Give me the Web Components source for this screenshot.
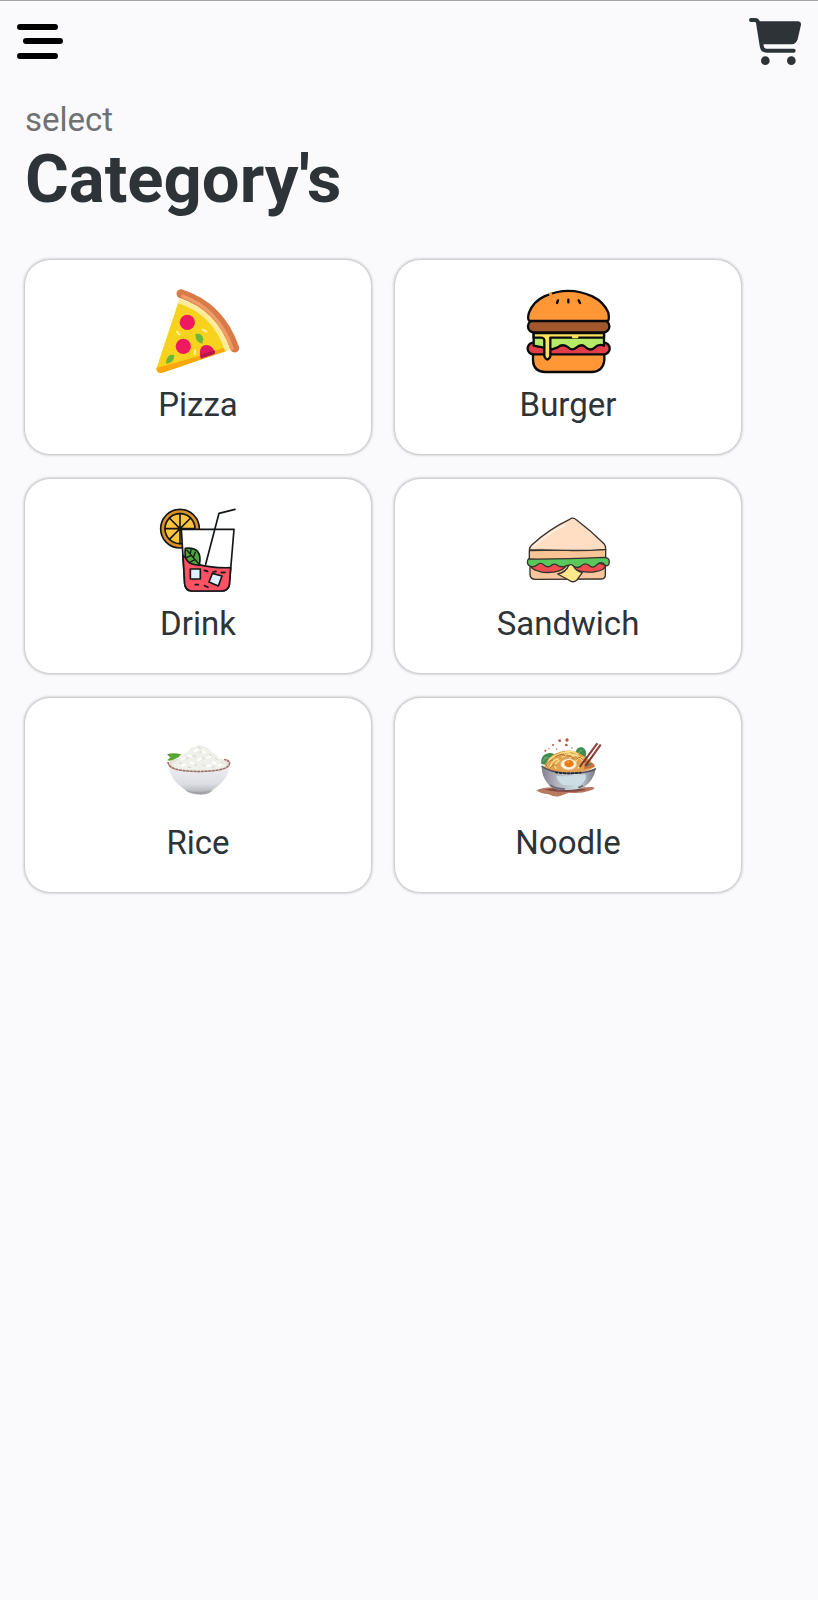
<!DOCTYPE html>
<html lang="en">
<head>
<meta charset="utf-8">
<meta name="viewport" content="width=device-width, initial-scale=1">
<title>Food categories</title>
<style>
  body { margin: 0; background: #fafafd; font-family: Roboto, sans-serif; color: #2d3337; }
</style>
</head>
<body>
<category-screen></category-screen>
<script>
const icons = {
  pizza: `<svg viewBox="33 30 252 252" aria-hidden="true">
    <path d="M101 64 Q208 91 252 210 L50 278 Q36 281 34 266Z" fill="#f7d31d"/>
    <path d="M34 264 Q140 236 235 204 L244 213 L50 279 Q36 281 34 264Z" fill="#fba70d"/>
    <path d="M98 70 L102 56 Q215 85 256 207 L240 213 Q203 101 98 70Z" fill="#ffec9a"/>
    <path d="M108 41 Q226 79 269 204" fill="none" stroke="#d97b48" stroke-width="27" stroke-linecap="round"/>
    <path d="M113 49 Q218 85 261 205" fill="none" stroke="#ef9c66" stroke-width="10" stroke-linecap="round"/>
    <circle cx="127" cy="127" r="23" fill="#ee1961"/><circle cx="115" cy="199" r="23" fill="#ee1961"/>
    <path d="M165 224 C160 184 207 188 209 220 L168 235Z" fill="#e3195c"/>
    <path d="M165 224 L210 211 L209 222 L168 236Z" fill="#bc144c"/>
    <path d="M151 162 Q171 158 175 177 L172 191 Q151 187 151 162Z M88 225 Q65 220 63 250 Q87 252 88 225Z" fill="#65b83c"/>
    <g stroke="#fff0a1" stroke-width="6" stroke-linecap="round"><path d="M96 155 L103 163 M173 149 L184 155 M150 211 L149 222"/></g>
  </svg>`,
  burger: `<svg viewBox="33 30 252 252" aria-hidden="true">
    <g stroke="#080a0c" stroke-width="7" stroke-linejoin="round" stroke-linecap="round">
    <path d="M54 216 H268 V242 Q263 276 230 276 H90 Q56 275 54 242Z" fill="#ff9736"/>
    <rect x="38" y="188" width="246" height="35" rx="17" fill="#e23e49"/>
    <path d="M56 155 H267 V197 Q252 190 239 203 Q225 215 211 201 Q199 190 184 203 Q171 214 158 201 Q143 190 128 202 L111 208 L56 197Z" fill="#b7e968"/>
    <path d="M56 159 H267 V173 H106 V229 Q97 248 88 229 V180 Q86 173 78 173 H56Z" fill="#ffe15f"/>
    <path d="M174 171 H187" stroke="#ffe15f"/>
    <rect x="39" y="121" width="244" height="36" rx="17" fill="#a3572c"/>
    <path d="M44 123 Q36 119 42 98 Q55 64 88 49 Q160 16 232 49 Q267 66 280 98 Q284 119 278 123Z" fill="#ff9736"/>
    <path d="M129 61 L126 69 M160 59 V67 M191 61 L195 69" fill="none"/>
    </g><path d="M103 45 L110 40" stroke="#ff9736" stroke-width="9"/>
  </svg>`,
  drink: `<svg viewBox="33 33 252 252" aria-hidden="true">
    <g stroke="#14171a" stroke-width="5" stroke-linejoin="round" stroke-linecap="round">
    <circle cx="105" cy="92" r="58" fill="#d99123"/><circle cx="105" cy="92" r="45" fill="#ffc43d"/>
    <path d="M105 47 V137 M60 92 H150 M73 60 L137 124 M137 60 L73 124" fill="none"/>
    <path d="M109 94 H267 L253 261 Q249 279 229 279 H140 Q121 278 119 257Z" fill="#fff"/>
    <path d="M114 172 Q130 191 158 199 Q205 211 257 209 L253 261 Q249 279 229 279 H140 Q121 278 119 257Z" fill="#ff5265"/>
    <path d="M182 199 L222 46 L270 34" fill="none"/>
    <path d="M121 151 Q174 145 163 201 Q113 202 121 151Z" fill="#4da53c"/>
    <path d="M126 157 L160 196 M136 168 L138 155 M145 178 L151 163 M138 173 L125 178 M149 185 L136 192" stroke-width="4" fill="none"/>
    <path d="M136 213 H166 V243 H136Z M202 226 L231 234 L220 264 L192 252Z" fill="#dff0ff"/>
    <path d="M178 217 L188 220 M204 222 L213 220 M229 224 L240 223 M151 260 H160 M179 263 L189 268" fill="none"/></g>
  </svg>`,
  sandwich: `<svg viewBox="33 33 252 252" aria-hidden="true">
    <g stroke="#39312d" stroke-width="4" stroke-linejoin="round" stroke-linecap="round">
    <path d="M45 202 H271 V232 Q270 244 255 243 L63 244 Q46 245 45 230Z" fill="#f9c69c"/>
    <path d="M43 158 L272 154 V188 H43Z" fill="#f9c596"/>
    <path d="M43 155 Q43 147 51 140 Q104 92 164 64 Q173 56 184 65 Q229 99 267 137 Q273 143 272 154 Q204 159 158 157Z" fill="#ffdec3"/>
    <path d="M46 195 Q96 184 151 207 Q133 226 85 223 Q42 216 46 195Z M174 210 Q218 183 272 201 Q271 218 235 222 Q197 225 174 210Z" fill="#ee4e50"/>
    <path d="M40 183 Q142 184 265 178 Q284 178 283 193 Q280 207 271 202 Q260 187 245 201 Q233 213 222 202 Q209 192 197 205 Q184 213 171 202 Q158 201 149 205 Q136 209 125 200 Q114 195 107 204 Q97 210 87 201 Q77 191 66 201 Q53 211 41 202 Q34 194 40 183Z" fill="#58c85c"/>
    <path d="M160 204 Q167 196 175 204 Q183 219 202 224 L185 247 Q174 256 161 246 L128 228 Q154 222 160 204Z" fill="#ffe68b"/></g>
    <path d="M52 149 Q100 104 151 81" fill="none" stroke="#fff0e5" stroke-width="5" stroke-linecap="round"/>
  </svg>`,
  rice: `<svg viewBox="33 24 252 252" aria-hidden="true">
    <defs><linearGradient id="bowl" x2="0" y2="1"><stop stop-color="#f0f0f3"/><stop offset=".65" stop-color="#dddee4"/><stop offset="1" stop-color="#aaaab1"/></linearGradient></defs>
    <path d="M66 103 Q85 96 109 103 Q102 114 92 116 Q81 125 66 121 L76 113Z" fill="#60ac36"/><path d="M70 105 L104 104 M70 119 L91 111" stroke="#4f9a2b" stroke-width="3"/>
    <ellipse cx="162" cy="132" rx="92" ry="22" fill="#e7e1db"/>
    <path d="M78 141 Q86 122 103 119 Q111 100 128 97 Q134 82 151 81 Q161 68 175 79 Q190 80 198 95 Q216 101 221 115 Q240 119 244 137 Q229 153 161 153 Q99 153 78 141Z" fill="#f0f0eb"/>
    <g fill="none" stroke="#fff" stroke-width="6" stroke-linecap="round"><path d="M110 118 l8-5 M130 106 l8 3 M149 93 l8-4 M174 94 l6 5 M187 113 l9-3 M203 127 l9 4 M159 121 l7-5 M136 128 l8 3 M112 137 l9-3 M187 139 l8-4 M222 137 l7-3"/></g>
    <g fill="none" stroke="#d5d3c9" stroke-width="3" stroke-linecap="round"><path d="M103 128 l7 2 M124 116 l6-3 M145 107 l7 4 M164 99 l5-4 M172 113 l6 4 M193 102 l6 5 M211 115 l4 4 M150 136 l6-3 M129 143 l8-2 M174 134 l5 4 M203 143 l6-3 M229 126 l5 3 M161 83 l6 2"/></g>
    <path d="M69 134 Q92 153 161 155 Q235 153 254 132 Q252 179 204 209 Q197 222 168 224 Q129 223 118 208 Q75 180 69 134Z" fill="url(#bowl)"/>
    <path d="M69 126 Q70 144 103 150 Q161 159 221 150 Q254 144 254 128 Q251 121 238 118" fill="none" stroke="#c9b3ad" stroke-width="5"/>
    <path d="M69 126 Q70 144 103 150 Q161 159 221 150 Q254 144 254 128 Q251 121 238 118" fill="none" stroke="#996e64" stroke-width="4" stroke-dasharray="8 3"/>
    <path d="M123 211 Q160 220 199 211 Q193 223 161 223 Q133 222 123 211Z" fill="#9999a0" opacity=".6"/>
  </svg>`,
  noodle: `<svg viewBox="33 24 252 252" aria-hidden="true">
    <defs><linearGradient id="bowl"><stop stop-color="#85808d"/><stop offset=".3" stop-color="#b4b7c2"/><stop offset=".65" stop-color="#ccdce3"/><stop offset="1" stop-color="#777681"/></linearGradient></defs>
    <path d="M64 211 Q91 198 145 204 L231 201 Q249 205 221 213 Q198 221 162 218 L132 229 Q119 232 101 223 Q77 221 64 211Z" fill="#b97861"/><path d="M88 209 Q155 194 216 209 Q160 223 88 209Z" fill="#7e4942"/>
    <path d="M79 132 Q76 111 91 103 Q111 94 119 105 L113 139Z M181 101 Q185 82 196 82 Q210 80 214 99 L210 120Z" fill="#408b50"/>
    <path d="M83 124 l14-15 M87 113 l20 3 M190 99 l12-11" stroke="#5fa468" stroke-width="5"/>
    <path d="M87 143 Q98 109 125 99 Q168 82 201 105 Q231 119 237 141 Q219 158 158 158 Q100 156 87 143Z" fill="#e1a24f"/>
    <g fill="none" stroke="#fae18c" stroke-width="4" stroke-linecap="round"><path d="M97 134 Q103 110 129 105 M105 142 Q111 119 130 117 M123 145 Q113 134 132 122 M127 105 Q147 92 165 101 M142 111 Q161 99 184 106 M163 116 Q182 94 202 121 M179 133 Q186 108 204 114 M189 144 Q198 130 214 128 M148 99 Q167 87 188 103"/></g>
    <g fill="none" stroke="#bb6933" stroke-width="3"><path d="M93 138 Q103 119 114 120 M120 111 Q140 98 151 108 M154 107 Q168 105 178 117 M184 119 Q195 105 204 120 M104 145 Q117 131 123 136"/></g>
    <path d="M209 123 Q219 116 224 130 Q239 126 239 141 L207 148Z" fill="#cc7042"/><path d="M216 137 l13-7" stroke="#518948" stroke-width="5"/>
    <path d="M247 70 L194 141 M257 74 L211 138" stroke="#7c3430" stroke-width="6"/><path d="M247 70 L217 108 M257 74 L234 105" stroke="#ad4b40" stroke-width="3"/>
    <ellipse cx="161" cy="133" rx="24" ry="17" fill="#fff5de" stroke="#d8b78e" stroke-width="2"/><ellipse cx="162" cy="131" rx="14" ry="11" fill="#ec7a18"/><circle cx="159" cy="127" r="3" fill="#ffab36"/>
    <path d="M80 137 Q101 157 160 160 Q224 159 243 143 Q237 180 207 202 Q185 211 151 210 Q111 211 96 188 Q79 165 80 137Z" fill="url(#bowl)"/>
    <path d="M125 167 Q167 172 210 163 Q221 174 197 196 L143 195 Q124 180 125 167Z" fill="#ccdde4"/>
    <path d="M80 138 Q101 157 160 160 Q224 159 242 146" fill="none" stroke="#514f59" stroke-width="5"/><path d="M121 157 Q154 163 199 158" fill="none" stroke="#25292f" stroke-width="5" stroke-dasharray="9 3"/>
    <path d="M105 195 Q122 207 150 207 M190 203 l14-6" stroke="#676671" stroke-width="5" fill="none"/>
    <g fill="#b85633"><circle cx="134" cy="62" r="4"/><circle cx="156" cy="60" r="5"/><circle cx="114" cy="75" r="3"/><circle cx="91" cy="92" r="3"/><circle cx="102" cy="86" r="2"/><circle cx="154" cy="75" r="4"/><circle cx="125" cy="87" r="2"/><circle cx="171" cy="84" r="2"/></g>
    <path d="M91 232 h10" stroke="#eaded8" stroke-width="2"/>
  </svg>`
};

class TopBar extends HTMLElement {
  constructor() {
    super();
    this.attachShadow({ mode: 'open' }).innerHTML = `
      <style>
        :host { display: block; border-top: 1px solid #a1a1a4; }
        header { display: flex; justify-content: space-between; align-items: center; padding: 16px 17px 0; border-top: 1px solid #fff; box-sizing: border-box; }
        button { display: block; padding: 0; border: 0; background: none; color: inherit; cursor: pointer; }
        svg { display: block; }
      </style>
      <header>
        <button type="button" aria-label="Open menu">
          <svg width="46" height="48" viewBox="0 0 46 48"><path d="M3 9H38M9 23H43M3 38H38" stroke="#000" stroke-width="6" stroke-linecap="round"/></svg>
        </button>
        <button type="button" aria-label="View cart">
          <svg width="52" height="48" viewBox="56 53 156 144">
            <path d="M62 59H74Q81 59 83 67L94 136Q96 151 109 151H190" fill="none" stroke="#2d3337" stroke-width="12" stroke-linecap="round"/>
            <path d="M81 63H204Q213 64 212 73L202 117Q197 132 184 132H100Q92 132 90 123Z" fill="#2d3337"/>
            <circle cx="105" cy="181" r="13" fill="#2d3337"/><circle cx="183" cy="181" r="13" fill="#2d3337"/>
          </svg>
        </button>
      </header>`;
  }
}
customElements.define('top-bar', TopBar);

class PageHeading extends HTMLElement {
  constructor() {
    super();
    this.attachShadow({ mode: 'open' }).innerHTML = `
      <style>
        :host { display: block; padding: 34px 25px 42px; }
        p { margin: 0; font-size: 33px; line-height: 40px; color: #707173; }
        h1 { margin: 0; font-size: 67px; line-height: 78px; font-weight: 700; }
      </style>
      <p><slot name="hint"></slot></p>
      <h1><slot></slot></h1>`;
  }
}
customElements.define('page-heading', PageHeading);

class CategoryCard extends HTMLElement {
  connectedCallback() {
    if (this.shadowRoot) return;
    this.attachShadow({ mode: 'open' }).innerHTML = `
      <style>
        :host { display: block; }
        button {
          display: flex; flex-direction: column; align-items: center; gap: 11px;
          width: 100%; padding: 30px 16px 29px; border: 0; border-radius: 25px;
          background: #fff; color: inherit; font: inherit; font-size: 33px; line-height: 40px;
          box-shadow: 0 0 3px 1px rgba(0, 0, 0, .27);
          cursor: pointer;
        }
        svg { display: block; width: 84px; height: 84px; overflow: visible; }
      </style>
      <button type="button">${icons[this.getAttribute('icon')]}<span><slot></slot></span></button>`;
  }
}
customElements.define('category-card', CategoryCard);

class CategoryGrid extends HTMLElement {
  constructor() {
    super();
    this.attachShadow({ mode: 'open' }).innerHTML = `
      <style>
        :host { display: grid; grid-template-columns: repeat(2, minmax(0, 1fr)); gap: 25px 24px; padding: 0 77px 40px 25px; }
      </style>
      <slot></slot>`;
  }
}
customElements.define('category-grid', CategoryGrid);

class CategoryScreen extends HTMLElement {
  constructor() {
    super();
    this.attachShadow({ mode: 'open' }).innerHTML = `
      <style>:host { display: block; }</style>
      <top-bar></top-bar>
      <main>
        <page-heading><span slot="hint">select</span>Category's</page-heading>
        <category-grid>
          <category-card icon="pizza">Pizza</category-card>
          <category-card icon="burger">Burger</category-card>
          <category-card icon="drink">Drink</category-card>
          <category-card icon="sandwich">Sandwich</category-card>
          <category-card icon="rice">Rice</category-card>
          <category-card icon="noodle">Noodle</category-card>
        </category-grid>
      </main>`;
  }
}
customElements.define('category-screen', CategoryScreen);
</script>
</body>
</html>
